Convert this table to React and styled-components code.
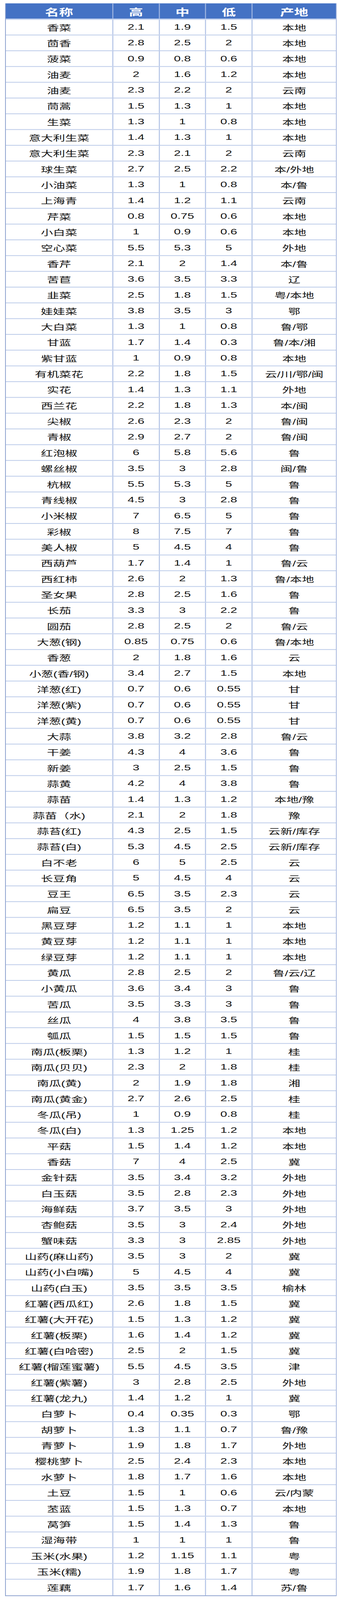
import React, { useLayoutEffect, useState } from 'react';
import styled, { createGlobalStyle } from 'styled-components';

// The reference sheet is laid out in its own 872 x 6194 pixel space;
// the frame is fitted to the window height while the page runs.
const SHEET_HEIGHT = 6194;

const GlobalStyle = createGlobalStyle`
  html, body {
    margin: 0;
    padding: 0;
    background: #ffffff;
    overflow: hidden;
  }
  body {
    font-family: "Liberation Sans", "Noto Sans CJK SC", sans-serif;
  }
`;

const LINE = '#bccbe9';
const COLS = '276fr 119fr 119fr 119fr 214fr';

const Frame = styled.div`
  height: 100vh;
  overflow: hidden;
`;

const Sheet = styled.div`
  height: ${SHEET_HEIGHT}px;
  box-sizing: border-box;
  padding: 13px 11px 0 13px;
  transform-origin: 0 0;
`;

const Table = styled.div`
  display: flex;
  flex-direction: column;
  border-left: 2px solid #8fa3cf;
  border-right: 2px solid #a7b8de;
  border-bottom: 3px solid #8fa3cf;
`;

const HeaderRow = styled.div`
  display: grid;
  grid-template-columns: ${COLS};
  height: 63px;
  box-sizing: border-box;
  background: #4472c4;
  border-bottom: 4px solid #c9d6ef;
`;

const HeaderCell = styled.div`
  display: flex;
  align-items: center;
  justify-content: center;
  padding-top: 4px;
  color: #ffffff;
  font-size: 36px;
  font-weight: 700;
  border-right: ${p => (p.$last ? 'none' : '3px solid #93acdd')};
`;

const Row = styled.div`
  display: grid;
  grid-template-columns: ${COLS};
  height: 61px;
  box-sizing: border-box;
  border-bottom: ${p => (p.$last ? 'none' : `3px solid ${LINE}`)};
`;

const Cell = styled.div`
  display: flex;
  align-items: center;
  justify-content: center;
  color: #111111;
  font-size: 31px;
  white-space: nowrap;
  border-right: ${p => (p.$last ? 'none' : `3px solid ${LINE}`)};
`;

const RAW = `香菜 2.1 1.9 1.5 本地
茴香 2.8 2.5 2 本地
菠菜 0.9 0.8 0.6 本地
油麦 2 1.6 1.2 本地
油麦 2.3 2.2 2 云南
茼蒿 1.5 1.3 1 本地
生菜 1.3 1 0.8 本地
意大利生菜 1.4 1.3 1 本地
意大利生菜 2.3 2.1 2 云南
球生菜 2.7 2.5 2.2 本/外地
小油菜 1.3 1 0.8 本/鲁
上海青 1.4 1.2 1.1 云南
芹菜 0.8 0.75 0.6 本地
小白菜 1 0.9 0.6 本地
空心菜 5.5 5.3 5 外地
香芹 2.1 2 1.4 本/鲁
苦苣 3.6 3.5 3.3 辽
韭菜 2.5 1.8 1.5 粤/本地
娃娃菜 3.8 3.5 3 鄂
大白菜 1.3 1 0.8 鲁/鄂
甘蓝 1.7 1.4 0.3 鲁/本/湘
紫甘蓝 1 0.9 0.8 本地
有机菜花 2.2 1.8 1.5 云/川/鄂/闽
实花 1.4 1.3 1.1 外地
西兰花 2.2 1.8 1.3 本/闽
尖椒 2.6 2.3 2 鲁/闽
青椒 2.9 2.7 2 鲁/闽
红泡椒 6 5.8 5.6 鲁
螺丝椒 3.5 3 2.8 闽/鲁
杭椒 5.5 5.3 5 鲁
青线椒 4.5 3 2.8 鲁
小米椒 7 6.5 5 鲁
彩椒 8 7.5 7 鲁
美人椒 5 4.5 4 鲁
西葫芦 1.7 1.4 1 鲁/云
西红柿 2.6 2 1.3 鲁/本地
圣女果 2.8 2.5 1.6 鲁
长茄 3.3 3 2.2 鲁
圆茄 2.8 2.5 2 鲁/云
大葱(钢) 0.85 0.75 0.6 鲁/本地
香葱 2 1.8 1.6 云
小葱(香/钢) 3.4 2.7 1.5 本地
洋葱(红) 0.7 0.6 0.55 甘
洋葱(紫) 0.7 0.6 0.55 甘
洋葱(黄) 0.7 0.6 0.55 甘
大蒜 3.8 3.2 2.8 鲁/云
干姜 4.3 4 3.6 鲁
新姜 3 2.5 1.5 鲁
蒜黄 4.2 4 3.8 鲁
蒜苗 1.4 1.3 1.2 本地/豫
蒜苗（水) 2.1 2 1.8 豫
蒜苔(红) 4.3 2.5 1.5 云新/库存
蒜苔(白) 5.3 4.5 2.5 云新/库存
白不老 6 5 2.5 云
长豆角 5 4.5 4 云
豆王 6.5 3.5 2.3 云
扁豆 6.5 3.5 2 云
黑豆芽 1.2 1.1 1 本地
黄豆芽 1.2 1.1 1 本地
绿豆芽 1.2 1.1 1 本地
黄瓜 2.8 2.5 2 鲁/云/辽
小黄瓜 3.6 3.4 3 鲁
苦瓜 3.5 3.3 3 鲁
丝瓜 4 3.8 3.5 鲁
瓠瓜 1.5 1.5 1.5 鲁
南瓜(板栗) 1.3 1.2 1 桂
南瓜(贝贝) 2.3 2 1.8 桂
南瓜(黄) 2 1.9 1.8 湘
南瓜(黄金) 2.7 2.6 2.5 桂
冬瓜(吊) 1 0.9 0.8 桂
冬瓜(白) 1.3 1.25 1.2 本地
平菇 1.5 1.4 1.2 本地
香菇 7 4 2.5 冀
金针菇 3.5 3.4 3.2 外地
白玉菇 3.5 2.8 2.3 外地
海鲜菇 3.7 3.5 3 外地
杏鲍菇 3.5 3 2.4 外地
蟹味菇 3.3 3 2.85 外地
山药(麻山药) 3.5 3 2 冀
山药(小白嘴) 5 4.5 4 冀
山药(白玉) 3.5 3.5 3.5 榆林
红薯(西瓜红) 2.6 1.8 1.5 冀
红薯(大开花) 1.5 1.3 1.2 冀
红薯(板栗) 1.6 1.4 1.2 冀
红薯(白哈密) 2.5 2 1.5 冀
红薯(榴莲蜜薯) 5.5 4.5 3.5 津
红薯(紫薯) 3 2.8 2.5 外地
红薯(龙九) 1.4 1.2 1 冀
白萝卜 0.4 0.35 0.3 鄂
胡萝卜 1.3 1.1 0.7 鲁/豫
青萝卜 1.9 1.8 1.7 外地
樱桃萝卜 2.5 2.4 2.3 本地
水萝卜 1.8 1.7 1.6 本地
土豆 1.5 1 0.6 云/内蒙
苤蓝 1.5 1.3 0.7 本地
莴笋 1.5 1.4 1.3 鲁
湿海带 1 1 1 鲁
玉米(水果) 1.2 1.15 1.1 粤
玉米(糯) 1.9 1.8 1.7 粤
莲藕 1.7 1.6 1.4 苏/鲁`;

const ROWS = RAW.split('\n').map(line => line.trim().split(' '));
const HEADERS = ['名称', '高', '中', '低', '产地'];

function useFitScale() {
  const [scale, setScale] = useState(1);
  useLayoutEffect(() => {
    const fit = () => setScale(Math.min(1, window.innerHeight / SHEET_HEIGHT));
    fit();
    window.addEventListener('resize', fit);
    return () => window.removeEventListener('resize', fit);
  }, []);
  return scale;
}

export default function App() {
  const scale = useFitScale();

  return (
    <>
      <GlobalStyle />
      <Frame>
        <Sheet style={{ transform: `scaleY(${scale})` }}>
          <Table>
            <HeaderRow>
              {HEADERS.map((h, i) => (
                <HeaderCell key={h} $last={i === HEADERS.length - 1}>{h}</HeaderCell>
              ))}
            </HeaderRow>
            {ROWS.map((row, r) => (
              <Row key={r} $last={r === ROWS.length - 1}>
                {row.map((v, c) => (
                  <Cell key={c} $last={c === row.length - 1}>{v}</Cell>
                ))}
              </Row>
            ))}
          </Table>
        </Sheet>
      </Frame>
    </>
  );
}
